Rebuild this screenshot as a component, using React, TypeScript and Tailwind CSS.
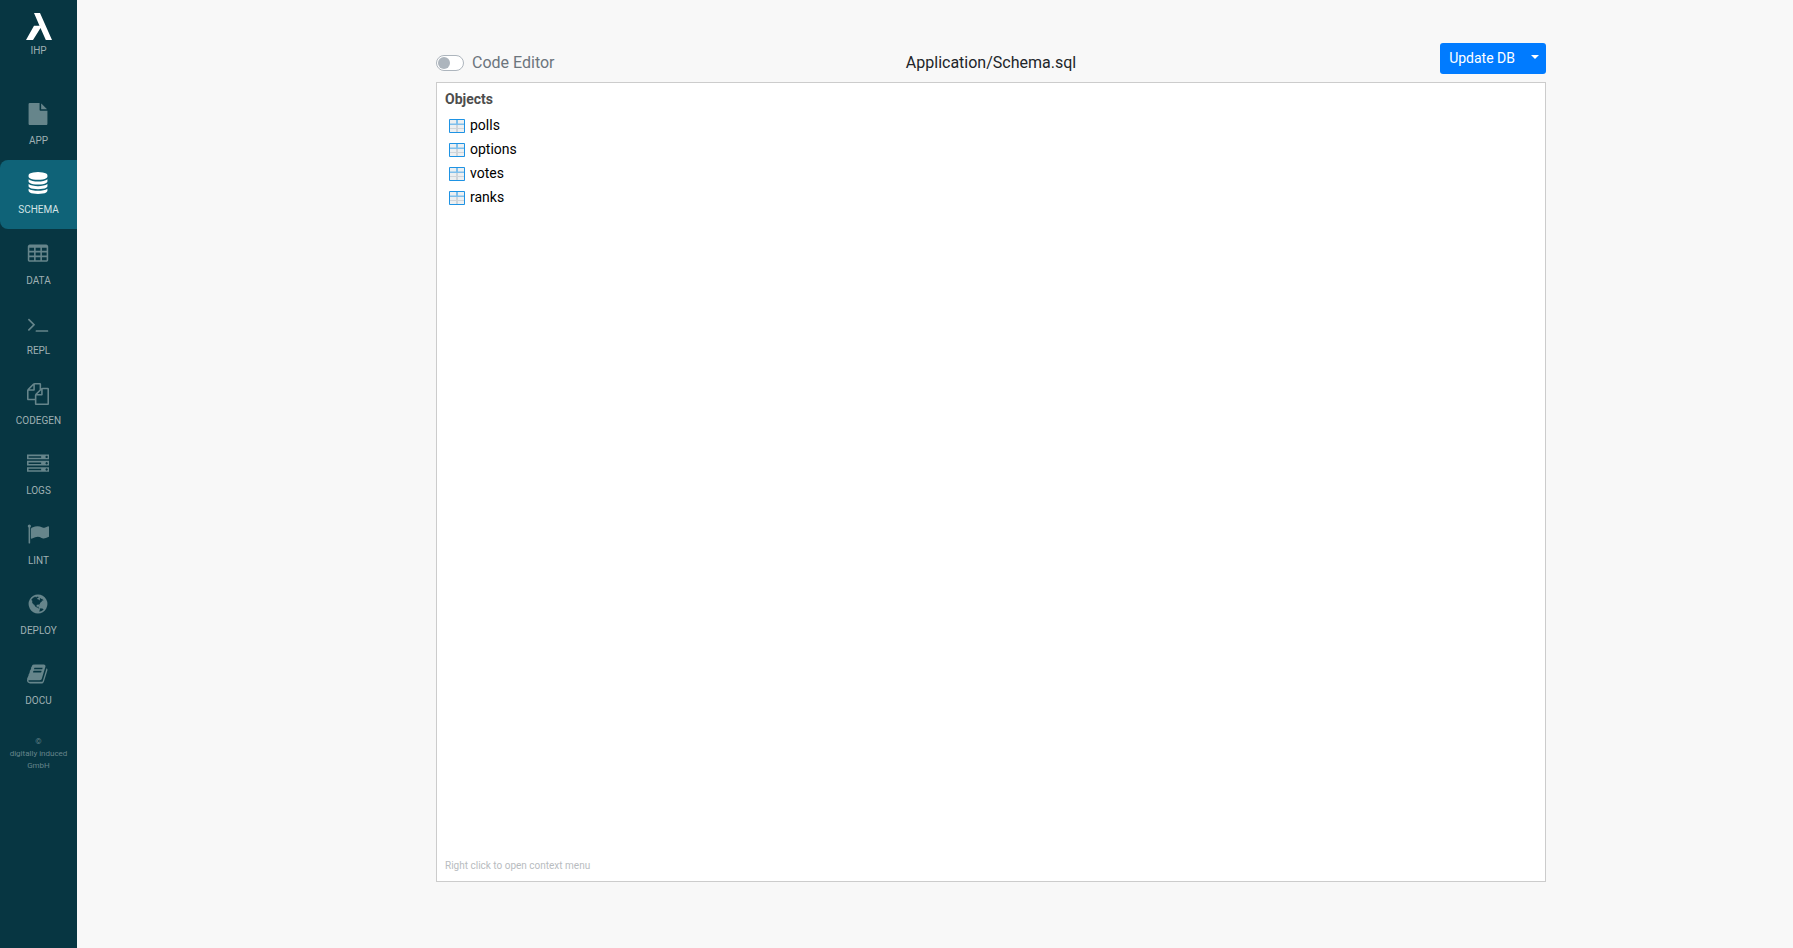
import React from "react";

type NavItem = { label: string; path: string; active?: boolean };

const NAV: NavItem[] = [
  {
    label: "APP",
    path: "M1152 512v-472q22 14 36 28l408 408q14 14 28 36h-472zm-128 32q0 40 28 68t68 28h544v1056q0 40-28 68t-68 28h-1344q-40 0-68-28t-28-68v-1600q0-40 28-68t68-28h800v544z",
  },
  {
    label: "SCHEMA",
    active: true,
    path: "M896 768q237 0 443-43t325-127v170q0 69-103 128t-280 93.5-385 34.5-385-34.5-280-93.5-103-128v-170q119 84 325 127t443 43zm0 768q237 0 443-43t325-127v170q0 69-103 128t-280 93.5-385 34.5-385-34.5-280-93.5-103-128v-170q119 84 325 127t443 43zm0-384q237 0 443-43t325-127v170q0 69-103 128t-280 93.5-385 34.5-385-34.5-280-93.5-103-128v-170q119 84 325 127t443 43zm0-1152q208 0 385 34.5t280 93.5 103 128v128q0 69-103 128t-280 93.5-385 34.5-385-34.5-280-93.5-103-128v-128q0-69 103-128t280-93.5 385-34.5z",
  },
  {
    label: "DATA",
    path: "M224 128h1344q66 0 113 47t47 113v1088q0 66-47 113t-113 47h-1344q-66 0-113-47t-47-113v-1088q0-66 47-113t113-47zM192 384v256h384v-256zM704 384v256h384v-256zM1216 384v256h384v-256zM192 768v256h384v-256zM704 768v256h384v-256zM1216 768v256h384v-256zM192 1152v256h384v-256zM704 1152v256h384v-256zM1216 1152v256h384v-256z",
  },
  {
    label: "REPL",
    path: "M649 983l-466 466q-10 10-23 10t-23-10l-50-50q-10-10-10-23t10-23l393-393-393-393q-10-10-10-23t10-23l50-50q10-10 23-10t23 10l466 466q10 10 10 23t-10 23zm1079 457v64q0 14-9 23t-23 9h-960q-14 0-23-9t-9-23v-64q0-14 9-23t23-9h960q14 0 23 9t9 23z",
  },
  {
    label: "CODEGEN",
    path: "M1696 384q40 0 68 28t28 68v1216q0 40-28 68t-68 28h-960q-40 0-68-28t-28-68v-288h-544q-40 0-68-28t-28-68v-672q0-40 20-88t48-76l408-408q28-28 76-48t88-20h416q40 0 68 28t28 68v328q68-40 128-40h416zm-544 213l-299 299h299v-299zm-640-384l-299 299h299v-299zm196 647l316-316v-416h-384v416q0 40-28 68t-68 28h-416v640h512v-256q0-40 20-88t48-76zm956 804v-1152h-384v416q0 40-28 68t-68 28h-416v640h896z",
  },
  {
    label: "LOGS",
    path: "M128 1408h1024v-128h-1024v128zm0-512h1024v-128h-1024v128zm1568 448q0-40-28-68t-68-28-68 28-28 68 28 68 68 28 68-28 28-68zm-1568-960h1024v-128h-1024v128zm1568 448q0-40-28-68t-68-28-68 28-28 68 28 68 68 28 68-28 28-68zm0-512q0-40-28-68t-68-28-68 28-28 68 28 68 68 28 68-28 28-68zm96 832v384h-1792v-384h1792zm0-512v384h-1792v-384h1792zm0-512v384h-1792v-384h1792z",
  },
  {
    label: "LINT",
    path: "M320 256q0 72-64 110v1266q0 13-9.5 22.5t-22.5 9.5h-64q-13 0-22.5-9.5t-9.5-22.5v-1266q-64-38-64-110 0-53 37.5-90.5t90.5-37.5 90.5 37.5 37.5 90.5zm1472 64v763q0 25-12.5 38.5t-39.5 27.5q-215 116-369 116-61 0-123.5-22t-108.5-48-115.5-48-142.5-22q-192 0-464 146-17 9-33 9-26 0-45-19t-19-45v-742q0-32 31-55 21-14 79-43 236-120 421-120 107 0 200 29t219 88q38 19 88 19 54 0 117.5-21t110-47 88-47 54.5-21q26 0 45 19t19 45z",
  },
  {
    label: "DEPLOY",
    path: "M896 128q209 0 385.5 103t279.5 279.5 103 385.5-103 385.5-279.5 279.5-385.5 103-385.5-103-279.5-279.5-103-385.5 103-385.5 279.5-279.5 385.5-103zm274 521q-2 1-9.5 9.5t-13.5 9.5q2 0 4.5-5t5-11 3.5-7q6-7 22-15 14-6 52-12 34-8 51 11-2-2 9.5-13t14.5-12q3-2 15-4.5t15-7.5l2-22q-12 1-17.5-7t-6.5-21q0 2-6 8 0-7-4.5-8t-11.5 1-9 1q-10-3-15-7.5t-8-16.5-4-15q-2-5-9.5-11t-9.5-10q-1-2-2.5-5.5t-3-6.5-4-5.5-5.5-2.5-7 5-7.5 10-4.5 5q-3-2-6-1.5t-4.5 1-4.5 3-5 3.5q-3 2-8.5 3t-8.5 2q15-5-1-11-10-4-16-3 9-4 7.5-12t-8.5-14h5q-1-4-8.5-8.5t-17.5-8.5-13-6q-8-5-34-9.500t-33-.5q-5 6-4.500 10.500t4 14 3.500 12.500q1 6-5.500 13t-6.500 12q0 7 14 15.500t10 21.500q-3 8-16 16t-16 12q-5 8-1.500 18.500t10.500 16.500q2 2 1.500 4t-3.500 4.500-5.500 4-6.500 3.500l-3 2q-11 5-20.500-6t-13.500-26q-7-25-16-30-23-8-29 1-5-13-41-26-25-9-58-4 6-1 0-15-7-15-19-12 3-6 4-17.500t1-13.500q3-13 12-23 1-1 7-8.500t9.500-13.500.5-6q35 4 50-11 5-5 11.500-17t10.500-17q9-6 14-5.500t14.500 5.500 14.500 5q14 1 15.500-11t-7.500-20q12 1 3-17-4-7-8-9-12-4-27 5-8 4 2 8-1-1-9.500 10.500t-16.500 17.500-16-5q-1-1-5.500-13.500t-9.500-13.500q-8 0-16 15 3-8-11-15t-24-8q19-12-8-27-7-4-20.500-5t-19.500 4q-5 7-5.500 11.500t5 8 10.500 5.500 11.500 4 8.500 3q14 10 8 14-2 1-8.500 3.500t-11.500 4.500-6 4q-3 4 0 14t-2 14q-5-5-9-17.500t-7-16.500q7 9-25 6l-10-1q-4 0-16 2t-20.500 1-13.500-8q-4-8 0-20 1-4 4-2-4-3-11-9.500t-10-8.500q-46 15-94 41 6 1 12-1 5-2 13-6.500t10-5.500q34-14 42-7l5-5q14 16 20 25-7-4-30-1-20 6-22 12 7 12 5 18-4-3-11.500-10t-14.500-11-15-5q-16 0-22 1-146 80-235 222 7 7 12 8 4 1 5 9t2.500 11 11.500-3q9 8 3 19 1-1 44 27 19 17 21 21 3 11-10 18-1-2-9-9t-9-4q-3 5 .5 18.500t10.500 12.500q-7 0-9.500 16t-2.500 35.500-1 23.500l2 1q-3 12 5.500 34.500t21.500 19.500q-13 3 20 43 6 8 8 9 3 2 12 7.500t15 10 10 10.500q4 5 10 22.500t14 23.500q-2 6 9.500 20t10.500 23q-1 0-2.500 1t-2.500 1q3 7 15.500 14t15.500 13q1 3 2 10t3 11 8 2q2-20-24-62-15-25-17-29-3-5-5.500-15.500t-4.500-14.500q2 0 6 1.500t8.500 3.500 7.500 4 2 3q-3 7 2 17.500t12 18.500 17 19 12 13q6 6 14 19.500t0 13.500q9 0 20 10.500t17 19.500q5 8 8 26t5 24q2 7 8.500 13.500t12.500 9.500l16 8 13 7q5 2 18.500 10.500t21.500 11.500q10 4 16 4t14.500-2.500 13.500-3.500q15-2 29 15t21 21q36 19 55 11-2 1 .5 7.500t8 15.500 9 14.500 5.500 8.500q5 6 18 15t18 15q6-4 7-9-3 8 7 20t18 10q14-3 14-32-31 15-49-18 0-1-2.500-5.500t-4-8.500-2.500-8.500 0-7.500 5-3q9 0 10-3.500t-2-12.500-4-13q-1-8-11-20t-12-15q-5 9-16 8t-16-9q0 1-1.500 5.500t-1.500 6.500q-13 0-15-1 1-3 2.500-17.500t3.500-22.500q1-4 5.500-12t7.500-14.500 4-12.500-4.500-9.500-17.500-2.500q-19 1-26 20-1 3-3 10.500t-5 11.500-9 7q-7 3-24 2t-24-5q-13-8-22.500-29t-9.500-37q0-10 2.500-26.500t3-25-5.500-24.500q3-2 9-9.500t10-10.500q2-1 4.500-1.500t4.500 0 4-1.500 3-6q-1-1-4-3-3-3-4-3 7 3 28.500-1.500t27.500 1.500q15 11 22-2 0-1-2.500-9.500t-.5-13.500q5 27 29 9 3 3 15.500 5t17.500 5q3 2 7 5.500t5.500 4.500 5-.5 8.500-6.500q10 14 12 24 11 40 19 44 7 3 11 2t4.500-9.500 0-14-1.500-12.500l-1-8v-18l-1-8q-15-3-18.500-12t1.500-18.500 15-18.500q1-1 8-3.500t15.500-6.500 12.500-8q21-19 15-35 7 0 11-9-1 0-5-3t-7.500-5-4.500-2q9-5 2-16 5-3 7.500-11t7.500-10q9 12 21 2 8-8 1-16 5-7 20.500-10.500t18.500-9.500q7 2 8-2t1-12 3-12q4-5 15-9t13-5l17-11q3-4 0-4 18 2 31-11 10-11-6-20 3-6-3-9.500t-15-5.500q3-1 11.500-.5t10.500-1.500q15-10-7-16-17-5-43 12zm-163 877q206-36 351-189-3-3-12.500-4.500t-12.500-3.500q-18-7-24-8 1-7-2.500-13t-8-9-12.500-8-11-7q-2-2-7-6t-7-5.500-7.500-4.500-8.500-2-10 1l-3 1q-3 1-5.500 2.500t-5.500 3-4 3 0 2.500q-21-17-36-22-5-1-11-5.500t-10.500-7-10-1.500-11.500 7q-5 5-6 15t-2 13q-7-5 0-17.500t2-18.500q-3-6-10.500-4.500t-12 4.500-11.500 8.500-9 6.500-8.500 5.500-8.500 7.500q-3 4-6 12t-5 11q-2-4-11.500-6.500t-9.500-5.500q2 10 4 35t5 38q7 31-12 48-27 25-29 40-4 22 12 26 0 7-8 20.500t-7 21.500q0 6 2 16z",
  },
  {
    label: "DOCU",
    path: "M1639 478q40 57 18 129l-275 906q-19 64-76.5 107.5t-122.5 43.5h-923q-77 0-148.5-53.5t-99.5-131.5q-24-67-2-127 0-4 3-27t4-37q1-8-3-21.5t-3-19.5q2-11 8-21t16.5-23.5 16.5-23.5q23-38 45-91.5t30-91.5q3-10 .5-30t-.5-28q3-11 17-28t17-23q21-36 42-92t25-90q1-9-2.5-32t.5-28q4-13 22-30.5t22-22.5q19-26 42.5-84.5t27.5-96.5q1-8-3-25.5t-2-26.5q2-8 9-18t18-23 17-21q8-12 16.5-30.5t15-35 16-36 19.5-32 26.5-23.5 36-11.5 47.5 5.5l-1 3q38-9 51-9h761q74 0 114 56t18 130l-274 906q-36 119-71.5 153.5t-128.5 34.5h-869q-27 0-38 15-11 16-1 43 24 70 144 70h923q29 0 56-15.5t35-41.5l300-987q7-22 5-57 38 15 59 43zm-1064 2q-4 13 2 22.5t20 9.5h608q13 0 25.5-9.5t16.5-22.5l21-64q4-13-2-22.5t-20-9.5h-608q-13 0-25.5 9.5t-16.5 22.5zm-83 256q-4 13 2 22.5t20 9.5h608q13 0 25.5-9.5t16.5-22.5l21-64q4-13-2-22.5t-20-9.5h-608q-13 0-25.5 9.5t-16.5 22.5z",
  },
];

const TABLES = ["polls", "options", "votes", "ranks"];

function NavLink({ label, path, active }: NavItem) {
  return (
    <a
      href={"#" + label.toLowerCase()}
      aria-current={active ? "page" : undefined}
      className={
        "flex flex-col items-center gap-2 rounded-l-lg text-[10px] leading-4 " +
        (active ? "mb-px h-[69px] bg-[#0f6378] pt-3 text-[#d5e3e6]" : "h-[70px] pt-[13px] text-[#9fb0b3]")
      }
    >
      <svg
        viewBox="0 0 1792 1792"
        aria-hidden="true"
        fillRule="evenodd"
        className={"mr-px size-[22px] " + (active ? "fill-white" : "fill-[#66858b]")}
      >
        <path d={path} />
      </svg>
      {label}
    </a>
  );
}

function Sidebar() {
  return (
    <nav className="w-[77px] shrink-0 bg-[#073642] text-center">
      <a href="#ihp" className="flex h-[90px] flex-col items-center gap-[3px] pt-[13px] text-[10px] leading-4 text-[#9fb0b3]">
        <svg viewBox="0 0 26 27" aria-hidden="true" className="h-[27px] w-[26px] fill-white">
          <path d="M8 0h6l12 27h-6.200L14.500 15 7 27H0L8 12.800h5.500z" />
        </svg>
        IHP
      </a>
      {NAV.map((item) => (
        <NavLink key={item.label} {...item} />
      ))}
      <p className="mt-4 px-1 text-[8px] leading-3 text-[#66858b]">
        ©<br />
        digitally induced
        <br />
        GmbH
      </p>
    </nav>
  );
}

function TableIcon() {
  return (
    <svg viewBox="0 0 16 14" aria-hidden="true" className="mt-[2px] h-[14px] w-4 shrink-0">
      <path fill="#eceff1" d="M0 0h16v14H0z" />
      <path fill="#cfd4d9" d="M1 9h14v1H1zM7 6h2v7H7z" />
      <path fill="#7fbfec" d="M1 4.500h14V6H1zM7 1h2v4H7z" />
      <path fill="none" stroke="#1e93e4" d="M.5.5h15v13H.5z" />
    </svg>
  );
}

export default function App() {
  return (
    <div className="flex min-h-screen bg-[#f8f8f8] font-['Roboto',sans-serif] text-[#212529]">
      <Sidebar />
      <main className="flex min-w-0 grow flex-col pb-[66px] pl-28 pt-[43px]">
        <div className="mx-auto flex w-full max-w-[1140px] grow flex-col px-[15px]">
          <header className="grid h-[39px] grid-cols-3 items-start">
            <label className="flex h-[39px] items-center gap-2 text-[16px] leading-6 text-[#6c757d]">
              <input type="checkbox" role="switch" className="peer sr-only" />
              <span className="flex h-4 w-7 rounded-full border border-[#adb5bd] bg-white p-px peer-checked:justify-end">
                <span className="size-3 rounded-full bg-[#adb5bd]" />
              </span>
              Code Editor
            </label>
            <h1 className="flex h-[39px] items-center justify-center text-[16px] leading-6">Application/Schema.sql</h1>
            <div className="flex justify-end text-[14px] leading-5 text-white">
              <button type="button" className="h-[31px] rounded-l-[3px] bg-[#007bff] px-[9px] pb-[2px]">
                Update DB
              </button>
              <button
                type="button"
                aria-label="More update options"
                className="flex h-[31px] items-center rounded-r-[3px] bg-[#007bff] px-[7px] pb-[3px]"
              >
                <svg viewBox="0 0 8 4" aria-hidden="true" className="h-1 w-2 fill-white">
                  <path d="M0 0h8L4 4z" />
                </svg>
              </button>
            </div>
          </header>
          <section className="flex grow flex-col border border-[#cccccc] bg-white px-2 pb-[7px]">
            <h2 className="pb-[3px] pt-[6px] text-[14px] font-bold leading-[21px] text-[#4d4d4d]">Objects</h2>
            <ul className="text-[14px] leading-6 text-black">
              {TABLES.map((name) => (
                <li key={name}>
                  <a href={"#" + name} className="flex h-6 items-center gap-[5px] pl-1">
                    <TableIcon />
                    {name}
                  </a>
                </li>
              ))}
            </ul>
            <p className="mt-auto text-[10px] leading-4 text-[#b8bcc0]">Right click to open context menu</p>
          </section>
        </div>
      </main>
    </div>
  );
}
